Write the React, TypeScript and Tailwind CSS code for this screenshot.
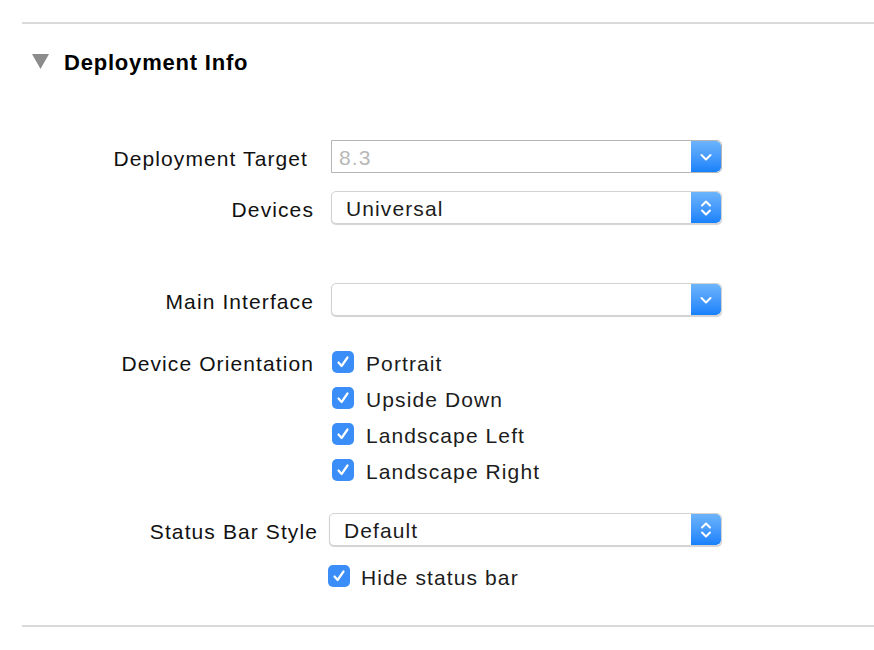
import React from "react";

// Xcode-style "Deployment Info" inspector section.

const FONT = { fontFamily: '"Liberation Sans", Arial, sans-serif' };

function Chevron({ double }: { double?: boolean }) {
  return (
    <div className="flex h-full w-[30px] items-center justify-center rounded-r-[5px] bg-gradient-to-b from-[#6cb4fb] to-[#1681fb]">
      {double ? (
        <svg width="14" height="22" viewBox="0 0 14 22" fill="none">
          <path d="M3 8.5 L7 4.5 L11 8.5" stroke="white" strokeWidth="2" strokeLinecap="round" strokeLinejoin="round" />
          <path d="M3 13.5 L7 17.5 L11 13.5" stroke="white" strokeWidth="2" strokeLinecap="round" strokeLinejoin="round" />
        </svg>
      ) : (
        <svg width="14" height="10" viewBox="0 0 14 10" fill="none">
          <path d="M2.5 3 L7 7.5 L11.5 3" stroke="white" strokeWidth="2" strokeLinecap="round" strokeLinejoin="round" />
        </svg>
      )}
    </div>
  );
}

function Select({
  value,
  disabled,
  double,
  indent = "pl-[14px]",
  width = "w-[391px]",
}: {
  value?: string;
  disabled?: boolean;
  double?: boolean;
  indent?: string;
  width?: string;
}) {
  return (
    <div
      className={`flex h-[33px] ${width} items-stretch overflow-hidden ${
        disabled
          ? "rounded-r-[5px] border border-[#b5b5b5]"
          : "rounded-[5px] border border-[#d2d2d2] shadow-[0_1px_1px_rgba(0,0,0,0.18)]"
      } bg-white`}
    >
      <div
        className={`flex flex-1 items-center ${indent} pt-[2px] text-[21px] leading-[26px] tracking-[1.1px] ${
          disabled ? "text-[#b8b8b8]" : "text-[#1c1c1c]"
        }`}
      >
        {value}
      </div>
      <Chevron double={double} />
    </div>
  );
}

function Check({ label, gap = "ml-[12px]" }: { label: string; gap?: string }) {
  return (
    <div className="flex h-[36px] items-center">
      <div className="flex h-[22px] w-[22px] items-center justify-center rounded-[5px] bg-[#3b8ef8]">
        <svg width="14" height="14" viewBox="0 0 14 14" fill="none">
          <path d="M2.5 7.5 L5.6 11 L11.5 2.5" stroke="white" strokeWidth="2.2" strokeLinecap="round" strokeLinejoin="round" />
        </svg>
      </div>
      <span className={`${gap} pt-[3px] text-[21px] leading-[26px] tracking-[1.1px] text-[#1c1c1c]`}>
        {label}
      </span>
    </div>
  );
}

function Label({ text, width = "w-[314px]" }: { text: string; width?: string }) {
  return (
    <div
      className={`${width} shrink-0 pt-[4px] text-right text-[21px] leading-[26px] tracking-[1.1px] text-[#111]`}
    >
      {text}
    </div>
  );
}

export default function App() {
  return (
    <div className="h-[650px] w-[874px] overflow-hidden bg-white" style={FONT}>
      <div className="pt-[22px] pl-[22px]">
        <div className="h-[2px] bg-[#dadada]" />
      </div>

      {/* section header */}
      <div className="mt-[29px] flex h-[20px] items-center">
        <svg className="mb-[3px] ml-[32px]" width="17" height="15" viewBox="0 0 17 15">
          <path d="M0 0 H17 L8.5 15 Z" fill="#8c8c8c" />
        </svg>
        <span className="ml-[15px] text-[22px] leading-[26px] font-bold tracking-[0.8px] text-black">
          Deployment Info
        </span>
      </div>

      <div className="mt-[67px]">
        <div className="flex items-center">
          <Label text="Deployment Target" width="w-[308px]" />
          <div className="ml-[23px]">
            <Select value="8.3" disabled indent="pl-[7px]" />
          </div>
        </div>

        <div className="mt-[18px] flex items-center">
          <Label text="Devices" />
          <div className="ml-[17px]">
            <Select value="Universal" double />
          </div>
        </div>

        <div className="mt-[59px] flex items-center">
          <Label text="Main Interface" />
          <div className="ml-[17px]">
            <Select />
          </div>
        </div>

        <div className="mt-[28px] flex items-start">
          <div className="flex h-[36px] items-center">
            <Label text="Device Orientation" />
          </div>
          <div className="ml-[18px]">
            <Check label="Portrait" />
            <Check label="Upside Down" />
            <Check label="Landscape Left" />
            <Check label="Landscape Right" />
          </div>
        </div>

        <div className="mt-[25px] flex items-center">
          <Label text="Status Bar Style" width="w-[318px]" />
          <div className="ml-[11px]">
            <Select value="Default" double width="w-[393px]" />
          </div>
        </div>

        <div className="mt-[12px] flex">
          <div className="ml-[328px]">
            <Check label="Hide status bar" gap="ml-[11px]" />
          </div>
        </div>
      </div>

      <div className="mt-[31px] pl-[22px]">
        <div className="h-[2px] bg-[#dadada]" />
      </div>
    </div>
  );
}
